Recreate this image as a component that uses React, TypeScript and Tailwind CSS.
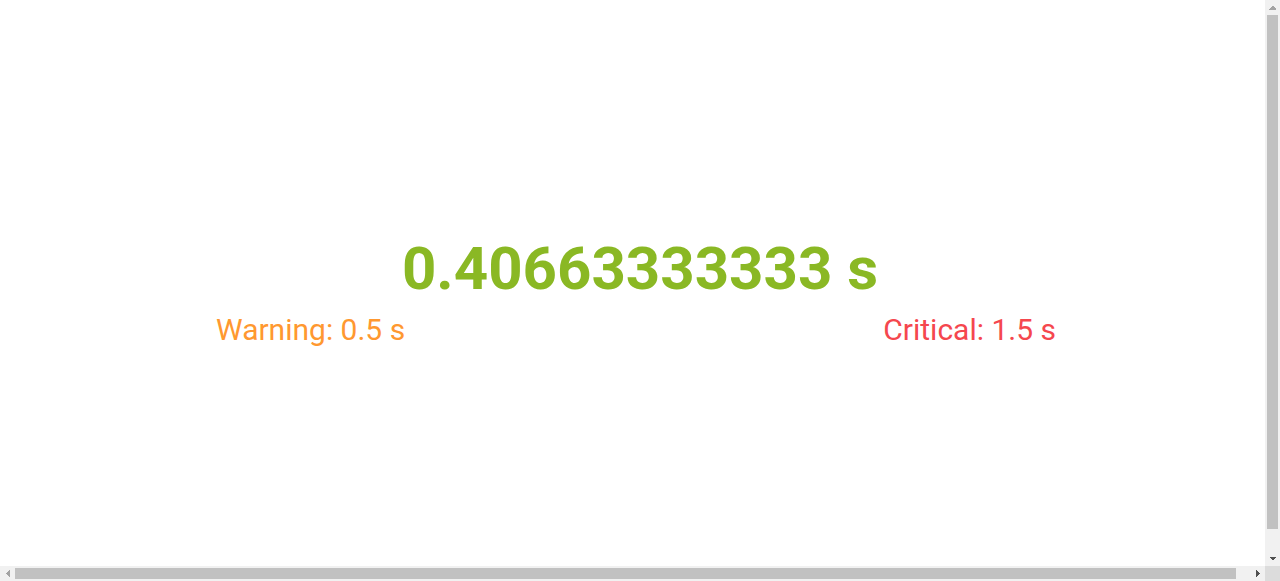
function Arrow({ dir, color }: { dir: 'up' | 'down' | 'left' | 'right'; color: string }) {
    const points = {
        up: '3.5,5.5 7.5,9.5 -0.5,9.5',
        down: '-0.5,5.5 7.5,5.5 3.5,9.5',
        left: '5.5,3.5 9.5,-0.5 9.5,7.5',
        right: '5.5,-0.5 9.5,3.5 5.5,7.5',
    }[dir];
    const box = dir === 'up' || dir === 'down' ? '0 0 7 15' : '0 0 15 7';
    return (
        <svg
            width={dir === 'up' || dir === 'down' ? 7 : 15}
            height={dir === 'up' || dir === 'down' ? 15 : 7}
            viewBox={box}
            shapeRendering="crispEdges"
        >
            <polygon points={points} fill={color} />
        </svg>
    );
}

export default function App() {
    return (
        <div
            className="w-[1280px] h-[581px] overflow-hidden flex flex-col bg-white"
            style={{ fontFamily: 'Roboto, "Liberation Sans", sans-serif' }}
        >
            <div className="flex h-[566px]">
                {/* Page content */}
                <div className="flex-1 overflow-hidden">
                    <div className="w-[1280px] pt-[234px]">
                        {/* Current value */}
                        <div className="text-center text-[60px] leading-[70px] font-bold text-[#8ab824]">
                            0.40663333333 s
                        </div>

                        {/* Thresholds */}
                        <div className="mt-[8px] flex justify-between pl-[216px] pr-[224px] text-[30px] leading-[35px]">
                            <span className="text-[#ff9830]">Warning: 0.5 s</span>
                            <span className="text-[#f5474e]">Critical: 1.5 s</span>
                        </div>
                    </div>
                </div>

                {/* Vertical scrollbar */}
                <div className="w-[15px] flex flex-col bg-[#f1f1f1]">
                    <div className="h-[15px] flex justify-center">
                        <Arrow dir="up" color="#a3a3a3" />
                    </div>
                    <div className="flex-1 px-[2px]">
                        <div className="h-[514px] bg-[#c1c1c1]" />
                    </div>
                    <div className="h-[15px] flex justify-center items-start">
                        <Arrow dir="down" color="#505050" />
                    </div>
                </div>
            </div>

            {/* Horizontal scrollbar */}
            <div className="flex h-[15px]">
                <div className="flex-1 flex bg-[#f1f1f1]">
                    <div className="w-[15px] flex items-center">
                        <Arrow dir="left" color="#a3a3a3" />
                    </div>
                    <div className="flex-1 py-[2px]">
                        <div className="w-[1221px] h-full bg-[#c1c1c1]" />
                    </div>
                    <div className="w-[15px] flex items-center">
                        <Arrow dir="right" color="#505050" />
                    </div>
                </div>
                <div className="w-[15px] bg-[#dcdcdc]" />
            </div>
        </div>
    );
}
